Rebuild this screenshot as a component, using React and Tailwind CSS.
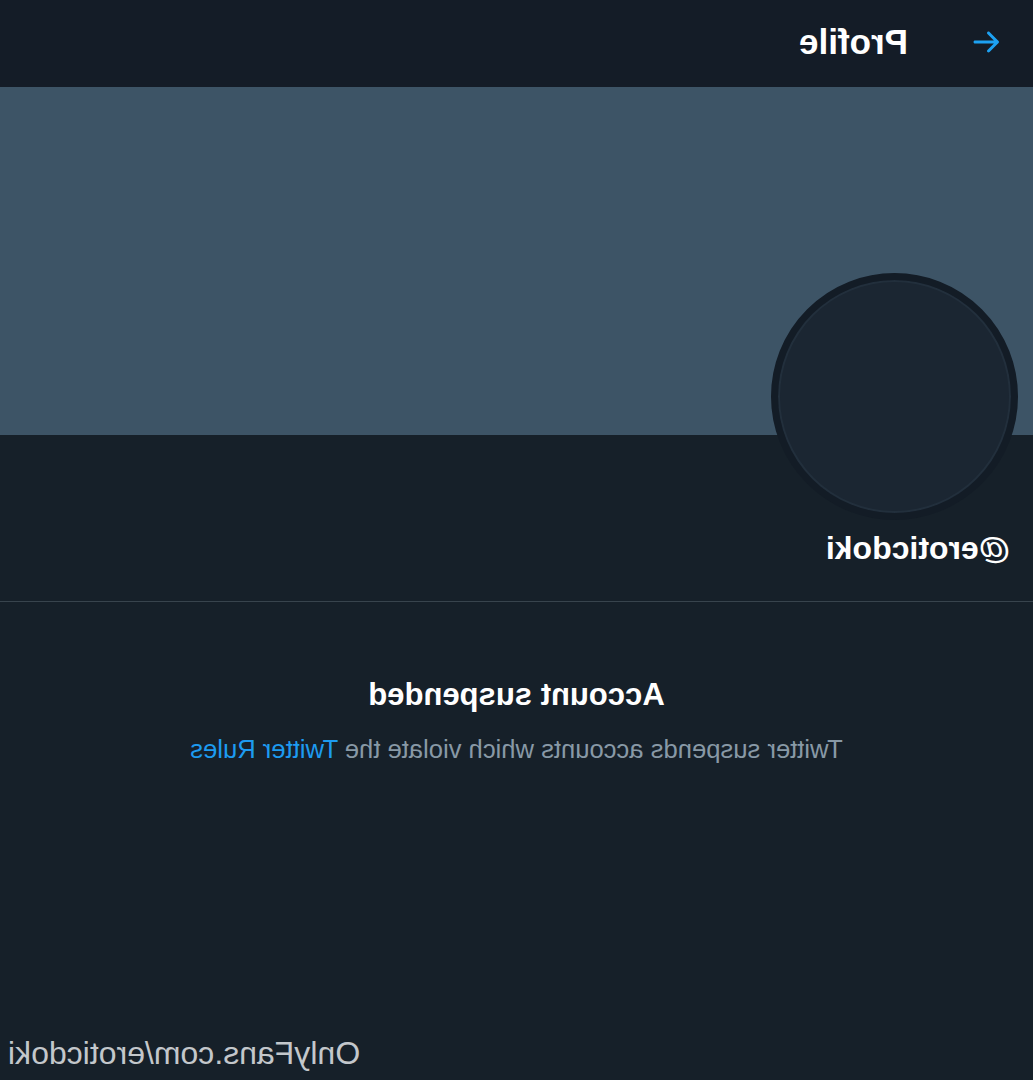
import React from 'react';

// The reference is a mirrored capture, so the whole page is flipped horizontally.
const BackArrow = () => (
  <svg viewBox="0 0 24 24" className="w-[36px] h-[36px] fill-[#1da1f2]">
    <path d="M20 11H7.414l4.293-4.293c.39-.39.39-1.023 0-1.414s-1.023-.39-1.414 0l-6 6c-.39.39-.39 1.023 0 1.414l6 6c.195.195.45.293.707.293s.512-.098.707-.293c.39-.39.39-1.023 0-1.414L7.414 13H20c.553 0 1-.447 1-1s-.447-1-1-1z" />
  </svg>
);

const App = () => {
  return (
    <div className="w-[1033px] h-[1080px] bg-[#162029] flex flex-col overflow-hidden [transform:scaleX(-1)] font-['Liberation_Sans',Arial,sans-serif]">
      {/* header */}
      <div className="h-[87px] bg-[#141c27] flex items-center pl-[28px] pb-[4px] shrink-0">
        <BackArrow />
        <h1 className="ml-[61px] text-[35px] leading-none font-bold text-white">Profile</h1>
      </div>

      {/* banner */}
      <div className="h-[348px] bg-[#3d5466] shrink-0" />

      {/* avatar */}
      <div className="mt-[-162px] pl-[15px]">
        <div className="w-[247px] h-[247px] rounded-full border-[7px] border-[#131c26] bg-[#1b2632] shadow-[inset_0_0_0_2px_#222f3c]" />
      </div>

      <div className="mt-[9px] pl-[23px] text-[32px] leading-[38px] font-bold text-white">@eroticdoki</div>

      <div className="mt-[34px] border-t border-[#38444d]" />

      {/* suspended notice */}
      <div className="mt-[74px] flex flex-col items-center">
        <h2 className="text-[31px] leading-[38px] font-bold text-white">Account suspended</h2>
        <p className="mt-[19px] text-[25.6px] leading-[32px] text-[#8899a6]">
          Twitter suspends accounts which violate the <span className="text-[#1d9bf0]">Twitter Rules</span>
        </p>
      </div>

      <div className="flex-1" />

      <div className="pb-[8px] pr-[8px] text-right text-[32px] leading-[38px] text-[#c3c7cb]">OnlyFans.com/eroticdoki</div>
    </div>
  );
};

export default App;
